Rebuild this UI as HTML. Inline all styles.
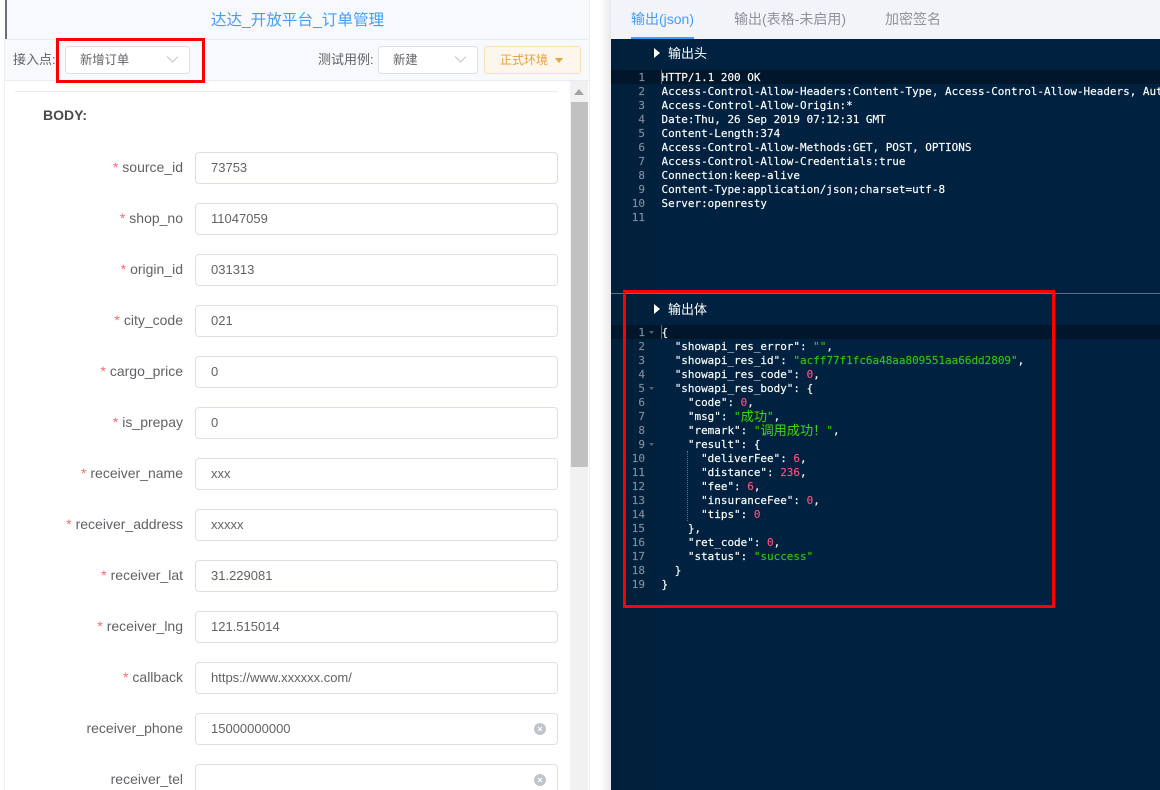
<!DOCTYPE html>
<html lang="zh">
<head>
<meta charset="utf-8">
<title>达达_开放平台_订单管理</title>
<style>
html,body{margin:0;padding:0;width:1160px;height:790px;overflow:hidden;background:#fff;font-family:"Liberation Sans","Noto Sans CJK SC",sans-serif;}
.a{position:absolute;}
#page{position:relative;width:1160px;height:790px;overflow:hidden;background:#fff;}
.lb{position:absolute;left:10px;width:173px;margin-top:-1px;text-align:right;font-size:14px;line-height:32px;color:#606266;white-space:nowrap;}
.lb i{font-style:normal;color:#f56c6c;margin-right:4px;}
.in{position:absolute;left:195px;width:361px;height:30px;border:1px solid #dcdfe6;border-radius:4px;background:#fff;font-size:13px;line-height:30px;color:#606266;text-indent:15px;}
.clr{position:absolute;left:534px;width:12px;height:12px;border-radius:50%;background:#c0c4cc;}
.sel{position:absolute;top:46px;height:26px;border:1px solid #dcdfe6;border-radius:4px;background:#fff;font-size:12.3px;line-height:26px;color:#606266;text-indent:14px;}
.mono{font-family:"DejaVu Sans Mono","Noto Sans CJK SC",monospace;font-size:10.96px;line-height:14px;white-space:pre;color:#fff;-webkit-text-stroke:.15px currentColor;}
.g{position:absolute;left:611px;width:34px;text-align:right;color:#7f8c9c;}
.s{color:#2fc40f}.n{color:#ff4f7b}
.cn{position:relative;top:1px;font-family:"Noto Sans CJK SC",sans-serif;font-size:13.2px;line-height:0;color:#3fd80f;-webkit-text-stroke:0;}
</style>
</head>
<body>
<div id="page">

<!-- left panel -->
<div class="a" style="left:5px;top:0;width:585px;height:790px;background:#fff;"></div>
<div class="a" style="left:5px;top:0;width:585px;height:80px;background:#f8f9fc;"></div>
<div class="a" style="left:5px;top:0;width:2px;height:39px;background:#6d6d7d;"></div>
<div class="a" style="left:5px;top:39px;width:585px;height:1px;background:#e8ebf3;"></div>
<div class="a" style="left:5px;top:80px;width:585px;height:1px;background:#e8ebf3;"></div>
<div class="a" style="left:4px;top:40px;width:1px;height:750px;background:#eef0f5;"></div>
<div class="a" style="left:589px;top:0;width:1px;height:790px;background:#eef0f5;"></div>
<div class="a" style="left:5px;top:0;width:585px;height:39px;text-align:center;font-size:15.6px;line-height:41px;color:#409eff;">达达_开放平台_订单管理</div>

<div class="a" style="left:13px;top:46px;font-size:13px;line-height:28px;color:#606266;">接入点:</div>
<div class="sel" style="left:65px;width:123px;">新增订单</div>
<svg class="a" style="left:166px;top:55px" width="13" height="9" viewBox="0 0 13 9"><path d="M1 1.5 6.5 7 12 1.5" fill="none" stroke="#c0c4cc" stroke-width="1"/></svg>

<div class="a" style="left:318px;top:46px;font-size:13px;line-height:28px;color:#606266;">测试用例:</div>
<div class="sel" style="left:378px;width:98px;">新建</div>
<svg class="a" style="left:454px;top:55px" width="13" height="9" viewBox="0 0 13 9"><path d="M1 1.5 6.5 7 12 1.5" fill="none" stroke="#c0c4cc" stroke-width="1"/></svg>

<div class="a" style="left:484px;top:46px;width:95px;height:26px;border:1px solid #f9dfb8;border-radius:3px;background:#fdf6ec;font-size:12px;line-height:26px;color:#e6a23c;text-indent:15px;">正式环境</div>
<svg class="a" style="left:555px;top:58px" width="8" height="5" viewBox="0 0 8 5"><path d="M0 0H8L4 5Z" fill="#e6a23c"/></svg>

<div class="a" style="left:15px;top:91px;width:543px;height:1px;background:#e8ebf3;"></div>
<div class="a" style="left:43px;top:107px;font-size:14px;font-weight:bold;line-height:16px;color:#4a4a4a;">BODY:</div>

<!-- scrollbar -->
<div class="a" style="left:570px;top:81px;width:18px;height:709px;background:#f1f1f1;"></div>
<div class="a" style="left:571px;top:102px;width:17px;height:365px;background:#c1c1c1;"></div>
<svg class="a" style="left:574px;top:89px" width="10" height="6" viewBox="0 0 10 6"><path d="M5 0 10 6H0Z" fill="#a3a3a3"/></svg>

<!-- form rows -->
<div class="lb" style="top:152px"><i>*</i>source_id</div><div class="in" style="top:152px">73753</div>
<div class="lb" style="top:203px"><i>*</i>shop_no</div><div class="in" style="top:203px">11047059</div>
<div class="lb" style="top:254px"><i>*</i>origin_id</div><div class="in" style="top:254px">031313</div>
<div class="lb" style="top:305px"><i>*</i>city_code</div><div class="in" style="top:305px">021</div>
<div class="lb" style="top:356px"><i>*</i>cargo_price</div><div class="in" style="top:356px">0</div>
<div class="lb" style="top:407px"><i>*</i>is_prepay</div><div class="in" style="top:407px">0</div>
<div class="lb" style="top:458px"><i>*</i>receiver_name</div><div class="in" style="top:458px">xxx</div>
<div class="lb" style="top:509px"><i>*</i>receiver_address</div><div class="in" style="top:509px">xxxxx</div>
<div class="lb" style="top:560px"><i>*</i>receiver_lat</div><div class="in" style="top:560px">31.229081</div>
<div class="lb" style="top:611px"><i>*</i>receiver_lng</div><div class="in" style="top:611px">121.515014</div>
<div class="lb" style="top:662px"><i>*</i>callback</div><div class="in" style="top:662px">https://www.xxxxxx.com/</div>
<div class="lb" style="top:713px">receiver_phone</div><div class="in" style="top:713px">15000000000</div>
<div class="clr" style="top:723px"></div>
<svg class="a" style="left:537px;top:726px" width="6" height="6" viewBox="0 0 6 6"><path d="M1 1 5 5M5 1 1 5" stroke="#fff" stroke-width="1"/></svg>
<div class="lb" style="top:764px">receiver_tel</div><div class="in" style="top:764px"></div>
<div class="clr" style="top:774px"></div>
<svg class="a" style="left:537px;top:777px" width="6" height="6" viewBox="0 0 6 6"><path d="M1 1 5 5M5 1 1 5" stroke="#fff" stroke-width="1"/></svg>

<!-- right panel -->
<div class="a" style="left:600px;top:0;width:11px;height:790px;background:linear-gradient(to right,#fff,#e9e9ee);"></div>
<div class="a" style="left:611px;top:0;width:549px;height:39px;background:#f3f4f9;"></div>
<div class="a" style="left:631px;top:0;font-size:14px;line-height:39px;color:#409eff;">输出(json)</div>
<div class="a" style="left:734px;top:0;font-size:14px;line-height:39px;color:#8f9399;">输出(表格-未启用)</div>
<div class="a" style="left:885px;top:0;font-size:14px;line-height:39px;color:#8f9399;">加密签名</div>
<div class="a" style="left:611px;top:39px;width:549px;height:751px;background:#002240;"></div>
<div class="a" style="left:631px;top:37px;width:63px;height:2px;background:#409eff;"></div>
<div class="a" style="left:611px;top:39px;width:47px;height:751px;background:#00203c;"></div>

<svg class="a" style="left:654px;top:48px" width="6" height="10" viewBox="0 0 6 10"><path d="M0 0 6 5 0 10Z" fill="#fff"/></svg>
<div class="a" style="left:668px;top:45px;font-size:13px;line-height:18px;color:#fff;">输出头</div>

<div class="a" style="left:611px;top:70px;width:549px;height:14px;background:#00162b;"></div>
<div class="a" style="left:661px;top:70px;width:1px;height:14px;background:#5c6b7a;"></div>

<div class="a mono g" style="top:71px">1
2
3
4
5
6
7
8
9
10
11</div>
<div class="a mono" style="left:661.5px;top:71px;width:498px;overflow:hidden;">HTTP/1.1 200 OK
Access-Control-Allow-Headers:Content-Type, Access-Control-Allow-Headers, Authorization
Access-Control-Allow-Origin:*
Date:Thu, 26 Sep 2019 07:12:31 GMT
Content-Length:374
Access-Control-Allow-Methods:GET, POST, OPTIONS
Access-Control-Allow-Credentials:true
Connection:keep-alive
Content-Type:application/json;charset=utf-8
Server:openresty</div>

<div class="a" style="left:611px;top:293px;width:549px;height:1px;background:#5f7283;"></div>

<svg class="a" style="left:654px;top:304px" width="6" height="10" viewBox="0 0 6 10"><path d="M0 0 6 5 0 10Z" fill="#fff"/></svg>
<div class="a" style="left:668px;top:301px;font-size:13px;line-height:18px;color:#fff;">输出体</div>

<div class="a" style="left:611px;top:325px;width:549px;height:14px;background:#00162b;"></div>
<div class="a" style="left:661px;top:325px;width:1px;height:14px;background:#5c6b7a;"></div>

<div class="a mono g" style="top:326px">1
2
3
4
5
6
7
8
9
10
11
12
13
14
15
16
17
18
19</div>
<svg class="a" style="left:649px;top:331px" width="5" height="3" viewBox="0 0 5 3"><path d="M0 0H5L2.5 3Z" fill="#4f6377"/></svg>
<svg class="a" style="left:649px;top:387px" width="5" height="3" viewBox="0 0 5 3"><path d="M0 0H5L2.5 3Z" fill="#4f6377"/></svg>
<svg class="a" style="left:649px;top:443px" width="5" height="3" viewBox="0 0 5 3"><path d="M0 0H5L2.5 3Z" fill="#4f6377"/></svg>
<div class="a" style="left:687px;top:451px;width:0;height:70px;border-left:1px dotted #5f7283;"></div>

<div class="a mono" style="left:661.5px;top:326px;">{
  "showapi_res_error": <span class="s">""</span>,
  "showapi_res_id": <span class="s">"acff77f1fc6a48aa809551aa66dd2809"</span>,
  "showapi_res_code": <span class="n">0</span>,
  "showapi_res_body": {
    "code": <span class="n">0</span>,
    "msg": <span class="s">"<span class="cn">成功</span>"</span>,
    "remark": <span class="s">"<span class="cn">调用成功！</span>"</span>,
    "result": {
      "deliverFee": <span class="n">6</span>,
      "distance": <span class="n">236</span>,
      "fee": <span class="n">6</span>,
      "insuranceFee": <span class="n">0</span>,
      "tips": <span class="n">0</span>
    },
    "ret_code": <span class="n">0</span>,
    "status": <span class="s">"success"</span>
  }
}</div>

<!-- red annotation boxes -->
<div class="a" style="left:56px;top:38px;width:143px;height:39px;border:3px solid #f00;"></div>
<div class="a" style="left:623px;top:290px;width:426px;height:312px;border:3px solid #f00;"></div>

</div>
</body>
</html>
